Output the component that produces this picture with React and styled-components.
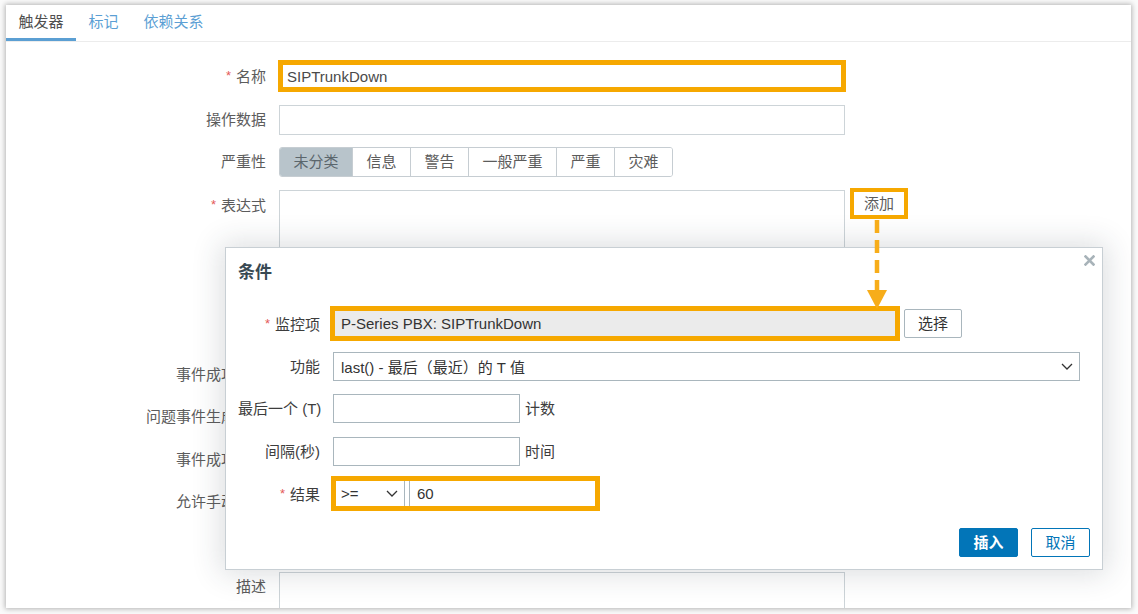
import React from 'react';
import styled, { createGlobalStyle } from 'styled-components';

const ORANGE = '#f6a800';
const BG_BORDER = '#cdd4d8';
const DLG_BORDER = '#a9b6bd';

const Global = createGlobalStyle`
  html, body { margin: 0; padding: 0; background: #ffffff; }
  body {
    font-family: "Liberation Sans", "Noto Sans CJK SC", sans-serif;
    font-size: 15px;
    color: #333;
  }
  * { box-sizing: border-box; }
`;

const Page = styled.div`
  width: 1138px;
  height: 614px;
  padding: 5px 7px 6px 6px;
  overflow: hidden;
  background: #fafafa;
`;

const Card = styled.div`
  position: relative;
  width: 1125px;
  height: 603px;
  background: #fff;
  overflow: hidden;
  box-shadow: 0 0 5px 1px rgba(0, 0, 0, 0.28);
`;

const TabBar = styled.div`
  display: flex;
  height: 37px;
  border-bottom: 1px solid #ececec;
`;

const Tab = styled.div`
  padding: 0 12.5px;
  height: 36px;
  line-height: 33px;
  color: ${(p) => (p.$active ? '#4f4f4f' : '#5c9fd4')};
  border-bottom: 3px solid ${(p) => (p.$active ? '#5b9fd3' : 'transparent')};
`;

const Form = styled.div`
  display: flex;
  flex-direction: column;
  gap: 12.5px;
  padding-top: 19px;
`;

const Row = styled.div`
  display: grid;
  grid-template-columns: ${(p) => p.$labelWidth || 260}px 1fr;
  column-gap: 13px;
  align-items: start;
  min-height: ${(p) => p.$height || 30}px;
`;

const Label = styled.div`
  text-align: right;
  line-height: ${(p) => p.$lh || 30}px;
  color: ${(p) => p.$color || '#5c5c5c'};
  white-space: nowrap;
`;

const Star = styled.span`
  color: #e45959;
  margin-right: 5px;
  font-size: 13px;
  vertical-align: 2px;
`;

const TextInput = styled.input`
  display: block;
  width: ${(p) => p.$w || 566}px;
  height: ${(p) => p.$h || 30}px;
  border: 1px solid ${(p) => p.$border || BG_BORDER};
  background: ${(p) => p.$bg || '#fff'};
  padding: 0 7px;
  font: inherit;
  color: ${(p) => p.$color || '#333'};
  outline: none;
  border-radius: 0;
`;

const TextArea = styled.div`
  width: 566px;
  height: ${(p) => p.$h || 74}px;
  border: 1px solid ${BG_BORDER};
  background: #fff;
`;

const Highlight = styled.div`
  position: relative;
  display: inline-flex;
  align-self: start;
  &::after {
    content: '';
    position: absolute;
    inset: ${(p) => p.$inset || '-3px'};
    border: ${(p) => p.$w || 5}px solid ${ORANGE};
    pointer-events: none;
    z-index: 3;
  }
`;

const Segmented = styled.div`
  display: inline-flex;
  align-self: start;
  border: 1px solid #c6cdd2;
  border-radius: 3px;
  overflow: hidden;
  height: 30px;
`;

const Segment = styled.div`
  padding: 0 13.5px;
  line-height: 28px;
  white-space: nowrap;
  color: ${(p) => (p.$selected ? '#5b666c' : '#5c5c5c')};
  background: ${(p) => (p.$selected ? '#b8c4cb' : '#fff')};
  & + & { border-left: 1px solid #c6cdd2; }
`;

const EmptySegments = styled.div`
  width: ${(p) => p.$w}px;
  height: 30px;
  border: 1px solid #c6cdd2;
  border-radius: 3px;
  background: #fff;
`;

const ExprControl = styled.div`
  display: flex;
  flex-direction: column;
  gap: 8px;
  height: 157.5px;
`;

const ExprTop = styled.div`
  display: flex;
  align-items: flex-start;
  gap: 7px;
`;

const GreyButton = styled.div`
  margin-top: 1px;
  height: 26px;
  padding: 0 11px;
  line-height: 24px;
  border: 1px solid ${BG_BORDER};
  border-radius: 2px;
  color: #5c5c5c;
  background: #fff;
  white-space: nowrap;
`;

const Checkbox = styled.div`
  margin-top: 7px;
  width: 16px;
  height: 16px;
  border: 1px solid ${BG_BORDER};
  background: #fff;
`;

/* ---------- dialog ---------- */

const Dialog = styled.div`
  position: absolute;
  left: 219px;
  top: 242px;
  width: 878px;
  height: 323px;
  background: #fff;
  border: 1px solid #c8cfd4;
  box-shadow: 0 0 28px 4px rgba(40, 50, 60, 0.16);
  display: flex;
  flex-direction: column;
  z-index: 2;
`;

const DialogHeader = styled.div`
  padding: 13px 12px 0;
`;

const Title = styled.h4`
  margin: 0;
  font-size: 17px;
  line-height: 24px;
  font-weight: bold;
  color: #384953;
`;

const CloseButton = styled.div`
  position: absolute;
  top: 7px;
  right: 7px;
  width: 11px;
  height: 11px;
  display: flex;
`;

const DialogBody = styled.div`
  display: flex;
  flex-direction: column;
  gap: 12.5px;
  padding: 24px 13px 0 12px;
`;

const Inline = styled.div`
  display: flex;
  align-items: center;
  gap: ${(p) => p.$gap || 5}px;
`;

const Suffix = styled.span`
  color: #3d3d3d;
  line-height: 29px;
`;

const SelectBox = styled.div`
  display: flex;
  align-items: center;
  justify-content: space-between;
  width: ${(p) => p.$w}px;
  height: 29px;
  padding: 0 6px 0 7px;
  border: 1px solid ${DLG_BORDER};
  background: #fff;
  color: #333;
  white-space: nowrap;
`;

const PlainButton = styled.div`
  width: 58px;
  height: 29px;
  line-height: 27px;
  text-align: center;
  border: 1px solid ${DLG_BORDER};
  border-radius: 2px;
  background: #fff;
  color: #333;
`;

const DialogFooter = styled.div`
  margin-top: auto;
  display: flex;
  justify-content: flex-end;
  gap: 13px;
  padding: 0 12px 12px;
`;

const FooterButton = styled.div`
  width: 59px;
  height: 29px;
  line-height: 27px;
  text-align: center;
  border-radius: 2px;
  border: 1px solid #0275b8;
  background: ${(p) => (p.$primary ? '#0275b8' : '#fff')};
  color: ${(p) => (p.$primary ? '#fff' : '#0275b8')};
  font-weight: ${(p) => (p.$primary ? 'bold' : 'normal')};
`;

const ArrowLayer = styled.svg`
  position: absolute;
  left: 859px;
  top: 215px;
  z-index: 4;
  overflow: visible;
`;

const Chevron = () => (
  <svg width="12" height="7" viewBox="0 0 12 7">
    <path d="M1 1 L6 6 L11 1" fill="none" stroke="#333" strokeWidth="1.3" />
  </svg>
);

const severities = ['未分类', '信息', '警告', '一般严重', '严重', '灾难'];

export default function App() {
  return (
    <>
      <Global />
      <Page>
        <Card>
          <TabBar>
            <Tab $active>触发器</Tab>
            <Tab>标记</Tab>
            <Tab>依赖关系</Tab>
          </TabBar>

          <Form>
            <Row>
              <Label><Star>*</Star>名称</Label>
              <div>
                <Highlight $inset="-1px">
                  <TextInput readOnly defaultValue="SIPTrunkDown" $color="#4a4a4a" />
                </Highlight>
              </div>
            </Row>
            <Row>
              <Label>操作数据</Label>
              <TextInput readOnly defaultValue="" />
            </Row>
            <Row>
              <Label>严重性</Label>
              <div>
                <Segmented>
                  {severities.map((s, i) => (
                    <Segment key={s} $selected={i === 0}>{s}</Segment>
                  ))}
                </Segmented>
              </div>
            </Row>
            <Row $height={157.5}>
              <Label><Star>*</Star>表达式</Label>
              <ExprControl>
                <ExprTop>
                  <TextArea />
                  <Highlight $inset="-2px" $w={4}>
                    <GreyButton>添加</GreyButton>
                  </Highlight>
                </ExprTop>
              </ExprControl>
            </Row>
            <Row>
              <Label>事件成功迭代</Label>
              <EmptySegments $w={250} />
            </Row>
            <Row>
              <Label>问题事件生成模式</Label>
              <EmptySegments $w={120} />
            </Row>
            <Row>
              <Label>事件成功关闭</Label>
              <EmptySegments $w={300} />
            </Row>
            <Row>
              <Label>允许手动关闭</Label>
              <Checkbox />
            </Row>
            <Row>
              <Label>URL</Label>
              <TextInput readOnly defaultValue="" />
            </Row>
            <Row>
              <Label>描述</Label>
              <TextArea $h={110} />
            </Row>
          </Form>

          <Dialog>
            <DialogHeader>
              <Title>条件</Title>
            </DialogHeader>
            <CloseButton>
              <svg width="11" height="11" viewBox="0 0 11 11">
                <path d="M1.5 1.5 L9.5 9.5 M9.5 1.5 L1.5 9.5" stroke="#a8b3b9" strokeWidth="2.6" strokeLinecap="square" />
              </svg>
            </CloseButton>
            <DialogBody>
              <Row $labelWidth={82}>
                <Label $lh={29} $color="#3d3d3d"><Star>*</Star>监控项</Label>
                <Inline $gap={8}>
                  <Highlight $inset="-3px -4px -3px -3px">
                    <TextInput
                      readOnly
                      $w={563}
                      $h={29}
                      $border={DLG_BORDER}
                      $bg="#ebebeb"
                      defaultValue="P-Series PBX: SIPTrunkDown"
                    />
                  </Highlight>
                  <PlainButton>选择</PlainButton>
                </Inline>
              </Row>
              <Row $labelWidth={82}>
                <Label $lh={29} $color="#3d3d3d">功能</Label>
                <SelectBox $w={747}>
                  <span>last() - 最后（最近）的 T 值</span>
                  <Chevron />
                </SelectBox>
              </Row>
              <Row $labelWidth={82}>
                <Label $lh={29} $color="#3d3d3d">最后一个 (T)</Label>
                <Inline>
                  <TextInput readOnly $w={187} $h={29} $border={DLG_BORDER} defaultValue="" />
                  <Suffix>计数</Suffix>
                </Inline>
              </Row>
              <Row $labelWidth={82}>
                <Label $lh={29} $color="#3d3d3d">间隔(秒)</Label>
                <Inline>
                  <TextInput readOnly $w={187} $h={29} $border={DLG_BORDER} defaultValue="" />
                  <Suffix>时间</Suffix>
                </Inline>
              </Row>
              <Row $labelWidth={82}>
                <Label $lh={29} $color="#3d3d3d"><Star>*</Star>结果</Label>
                <div>
                  <Highlight $inset="-3px -3px -3px -2px">
                    <Inline $gap={4}>
                      <SelectBox $w={72}>
                        <span>&gt;=</span>
                        <Chevron />
                      </SelectBox>
                      <TextInput readOnly $w={188} $h={29} $border={DLG_BORDER} defaultValue="60" />
                    </Inline>
                  </Highlight>
                </div>
              </Row>
            </DialogBody>
            <DialogFooter>
              <FooterButton $primary>插入</FooterButton>
              <FooterButton>取消</FooterButton>
            </DialogFooter>
          </Dialog>

          <ArrowLayer width="24" height="88" viewBox="0 0 24 88">
            <line x1="12" y1="0" x2="12" y2="70" stroke="#f7ad1a" strokeWidth="4.5" strokeDasharray="13 7" />
            <polygon points="2,70 22,70 12,89" fill="#f7ad1a" />
          </ArrowLayer>
        </Card>
      </Page>
    </>
  );
}
